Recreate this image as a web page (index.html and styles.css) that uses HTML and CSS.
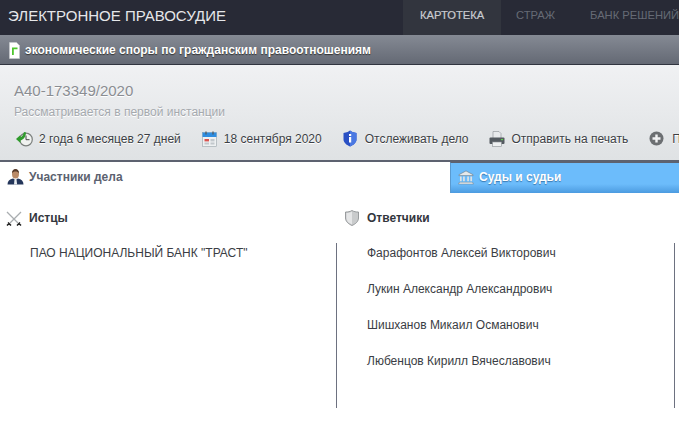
FILE: index.html
```html
<!DOCTYPE html>
<html lang="ru">
<head>
<meta charset="utf-8">
<title>Электронное правосудие</title>
<link rel="stylesheet" href="styles.css">
</head>
<body>
<header class="top">
  <div class="brand">ЭЛЕКТРОННОЕ ПРАВОСУДИЕ</div>
  <nav class="nav">
    <a class="nav-item active">КАРТОТЕКА</a>
    <a class="nav-item">СТРАЖ</a>
    <a class="nav-item">БАНК РЕШЕНИЙ</a>
  </nav>
</header>
<div class="kind">
  <svg class="kind-icon" width="11" height="17" viewBox="0 0 11 17"><path d="M.5.5h7l3 3v13H.5z" fill="#fff" stroke="#c9ccd0" stroke-width=".6"/><path d="M3 5.500h5.500v1.700H4.800V13H3z" fill="#4fc62f"/></svg>
  <span>экономические споры по гражданским правоотношениям</span>
</div>
<section class="case">
  <h1 class="case-no">А40-173349/2020</h1>
  <p class="case-state">Рассматривается в первой инстанции</p>
  <div class="actions">
    <span class="action a-time">
      <svg width="17" height="16" viewBox="0 0 17 16"><circle cx="10" cy="8.500" r="6.300" fill="#f0f2f0" stroke="#7b7f7d" stroke-width="1.200"/><path d="M10 4.500v4.200h3.500" fill="none" stroke="#444" stroke-width="1"/><path d="M0 8l4.500-4v2.200C6 6 7 4.500 8 1l2 .5C10 5 8 8.500 4.500 9.500V12z" fill="#2f9b2c"/></svg>
      2 года 6 месяцев 27 дней
    </span>
    <span class="action a-date">
      <svg width="15" height="16" viewBox="0 0 15 16"><rect x=".5" y="1.500" width="14" height="14" fill="#eef1f2" stroke="#9aa3aa" stroke-width=".6"/><rect x=".5" y="1.500" width="14" height="4.500" fill="#2f8de0"/><path d="M4 .5v3M11 .5v3" stroke="#555" stroke-width="1.200"/><rect x="2.500" y="8" width="4.500" height="2.400" fill="#d9534f"/><rect x="2.500" y="11.500" width="4.500" height="2" fill="#c2c8cc"/><rect x="8.500" y="8" width="4" height="2.400" fill="#c2c8cc"/><rect x="8.500" y="11.500" width="4" height="2" fill="#c2c8cc"/></svg>
      18 сентября 2020
    </span>
    <span class="action a-track">
      <svg width="14" height="17" viewBox="0 0 14 17"><path d="M7 .5l2.400 1.600L13.500 3v6.500c0 3.300-3.500 5.800-6.500 7-3-1.200-6.500-3.700-6.500-7V3l4.100-.9z" fill="#2a50c4"/><path d="M7 .5l2.400 1.600L13.500 3v6.500c0 3.300-3.500 5.800-6.500 7z" fill="#4a78e2"/><rect x="6" y="4" width="2.200" height="2" fill="#fff"/><rect x="6" y="7" width="2.200" height="5.500" fill="#fff"/></svg>
      Отслеживать дело
    </span>
    <span class="action a-print">
      <svg width="16" height="16" viewBox="0 0 16 16"><path d="M4 .5h6l2 2v5H4z" fill="#e8eaec" stroke="#8a8f94" stroke-width=".6"/><rect x=".5" y="6.500" width="15" height="6.500" rx="1" fill="#555b61"/><rect x="12" y="8" width="2" height="1.200" fill="#5fd04f"/><rect x="3.500" y="11" width="9" height="4.500" fill="#eef0f1" stroke="#8a8f94" stroke-width=".6"/></svg>
      Отправить на печать
    </span>
    <span class="action a-more">
      <svg width="15" height="15" viewBox="0 0 15 15"><circle cx="7.500" cy="7.500" r="7" fill="#6c6f72"/><path d="M7.500 3.500v8M3.500 7.500h8" stroke="#f1f2f3" stroke-width="2.400"/></svg>
      Подписаться
    </span>
  </div>
</section>
<div class="tabs">
  <div class="tab tab-on">
    <svg width="17" height="17" viewBox="0 0 17 17"><path d="M.5 16.500c0-3.500 2-5.500 5.500-6l2.500 1 2.500-1c3.500.5 5.500 2.500 5.500 6z" fill="#24365a"/><path d="M7.500 11h2l.6 5.500H7z" fill="#e8ecf0"/><ellipse cx="8.500" cy="6" rx="3.500" ry="4.600" fill="#b98a68"/><path d="M5 5.500C4.800 2.500 6.500 1 8.500 1s3.700 1.500 3.500 4.500c-.8-1.500-2-2-3.500-2s-2.700.5-3.500 2z" fill="#54392a"/></svg>
    <span>Участники дела</span>
  </div>
  <div class="tab tab-off">
    <svg width="16" height="15" viewBox="0 0 17 15"><path d="M8.500 .5L16 4.500v1H1v-1z" fill="#e6e9ea" stroke="#6b7780" stroke-width=".6"/><path d="M3 6.500v5M6.300 6.500v5M10.700 6.500v5M14 6.500v5" stroke="#dfe3e5" stroke-width="1.800"/><path d="M1.500 12.500h14v1h1v1H.5v-1h1z" fill="#e6e9ea" stroke="#6b7780" stroke-width=".4"/></svg>
    <span>Суды и судьи</span>
  </div>
</div>
<main class="parties">
  <section class="col col-left">
    <h2 class="col-title">
      <svg class="t-icon" width="16" height="15" viewBox="0 0 16 15"><path d="M1 1l11 11M15 1L4 12" stroke="#a9adb0" stroke-width="1.300"/><path d="M11 14.500l3-3M5 14.500l-3-3M13 12.500l2 2M3 12.500l-2 2" stroke="#222" stroke-width="1.500"/></svg>
      <span>Истцы</span>
    </h2>
    <ul class="names">
      <li>ПАО НАЦИОНАЛЬНЫЙ БАНК "ТРАСТ"</li>
    </ul>
  </section>
  <section class="col col-right">
    <h2 class="col-title">
      <svg class="t-icon" width="14" height="16" viewBox="0 0 14 16"><path d="M7 .5c2 1.200 4 1.500 6.500 1.500v6c0 3.500-3 6-6.500 7.500C3.500 14 .5 11.500.5 8V2C3 2 5 1.700 7 .5z" fill="#c9cbcc" stroke="#85898b" stroke-width=".8"/><path d="M7 1.500v13C4 13.200 1.500 11 1.500 8V3C3.500 3 5.300 2.500 7 1.500z" fill="#e5e6e7"/></svg>
      <span>Ответчики</span>
    </h2>
    <ul class="names">
      <li>Фарафонтов Алексей Викторович</li>
      <li>Лукин Александр Александрович</li>
      <li>Шишханов Микаил Османович</li>
      <li>Любенцов Кирилл Вячеславович</li>
    </ul>
  </section>
</main>
</body>
</html>
```
FILE: styles.css
```css
* { box-sizing: border-box; }
html, body { margin: 0; padding: 0; height: 100%; }
body {
  width: 679px;
  height: 428px;
  overflow: hidden;
  background: #fff;
  font-family: "Liberation Sans", Arial, sans-serif;
  font-size: 12px;
  color: #333;
}
.top {
  height: 35px;
  background: #282a36;
  display: flex;
  align-items: stretch;
  justify-content: space-between;
  overflow: hidden;
}
.brand {
  padding-left: 8px;
  color: #e6e7ea;
  font-size: 15px;
  line-height: 31px;
  white-space: nowrap;
}
.nav { display: flex; width: 276px; flex: none; }
.nav-item {
  flex: none;
  font-size: 11.200px;
  line-height: 30px;
  color: #666a75;
  padding: 0 20px 0 15px;
  white-space: nowrap;
}
.nav-item:last-child { padding-right: 0; }
.active {
  width: 98px;
  padding: 0 0 0 17px;
  background: #32353e;
  color: #c9cbd0;
  -webkit-text-stroke: .2px #c9cbd0;
}
.kind {
  height: 30px;
  background: linear-gradient(#858a94, #646974);
  border-bottom: 1px solid #30343f;
  display: flex;
  align-items: center;
  gap: 5px;
  padding: 1px 0 0 9px;
  color: #fff;
  font-size: 12px;
  font-weight: bold;
  text-shadow: 0 1px 1px #333;
}
.case {
  height: 97px;
  background: linear-gradient(#f0f1f3, #dfe2e4);
  border-bottom: 2px solid #5d6270;
  padding: 16px 0 0 14px;
  overflow: hidden;
  text-shadow: 0 1px 0 #fff;
}
.case-no {
  margin: 0;
  font-size: 15px;
  font-weight: normal;
  line-height: 20px;
  color: #8a8d92;
}
.case-state {
  margin: 4px 0 0;
  font-size: 12px;
  line-height: 14px;
  color: #a5a9ae;
}
.actions {
  display: flex;
  align-items: center;
  gap: 21px;
  margin: 11px 0 0 2px;
  white-space: nowrap;
  color: #3c3f45;
}
.action { display: flex; align-items: center; gap: 8px; flex: none; }
.a-time { gap: 6px; }
.a-date, .a-print { gap: 7px; }
.a-print { margin-left: -1px; }
.tabs { display: flex; height: 31px; }
.tab {
  display: flex;
  align-items: center;
  gap: 5px;
  font-weight: bold;
  font-size: 12px;
  padding-bottom: 2px;
}
.tab-on { width: 450px; padding-left: 7px; color: #5c6270; }
.tab-off {
  flex: 1;
  padding-left: 7px;
  color: #fff;
  background: linear-gradient(#6cbcfb 0, #6cbcfb 70%, #4c9be0 100%);
  border-top: 1px solid #5d6270;
  border-left: 1px solid #5a9ad0;
  text-shadow: 0 1px 1px #3a78b0;
}
.parties { display: flex; padding-top: 13px; }
.col { flex: none; }
.col-left { width: 337px; }
.col-right { width: 338px; }
.col-title {
  margin: 0;
  height: 24px;
  display: flex;
  align-items: center;
  font-size: 12px;
  font-weight: bold;
  color: #33363d;
  gap: 8px;
}
.col-left .col-title { padding-left: 6px; gap: 7px; }
.col-right .col-title { padding-left: 8px; }
.names {
  list-style: none;
  margin: 13px 0 0;
  padding: 0;
  height: 165px;
  border-right: 1px solid #6d7180;
  color: #3a3d44;
}
.names li { height: 36px; line-height: 20px; padding-left: 30px; }
```
